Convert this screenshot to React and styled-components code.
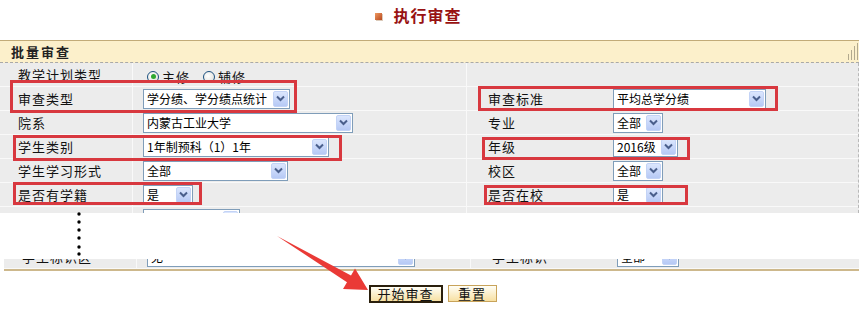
import React from 'react'
import styled, { createGlobalStyle } from 'styled-components'

const GlobalStyle = createGlobalStyle`
  html, body { margin: 0; padding: 0; background: #fff; }
  body {
    font-family: "Noto Sans CJK SC", "Liberation Sans", sans-serif;
    font-size: 12px;
    color: #000;
  }
`

const Page = styled.div`
  position: relative;
  width: 861px;
  height: 310px;
  overflow: hidden;
`

const TitleBar = styled.div`
  height: 40px;
  box-sizing: border-box;
  padding: 5px 24px 0 0;
  display: flex;
  justify-content: center;
  align-items: flex-start;
  gap: 11px;
`

const TitleIcon = styled.span`
  width: 7px;
  height: 7px;
  margin-top: 8px;
  background: linear-gradient(135deg, #ee9a62, #b8481e);
  box-shadow: 1px 1px 0 #dccbbb;
`

const Title = styled.h1`
  margin: 0;
  font-size: 16px;
  line-height: 20px;
  font-weight: bold;
  letter-spacing: 1px;
  color: #981212;
`

const Panel = styled.div`
  width: 859px;
  border-top: 1px solid #c2ab78;
`

const PanelHead = styled.div`
  height: 21px;
  background: #fcf0cb;
  border-bottom: 1px dashed #a9a9a9;
  display: flex;
  align-items: center;
  justify-content: space-between;
  padding: 0 0 0 11px;
  font-size: 13px;
  font-weight: bold;
  letter-spacing: 2px;
  color: #222;
`

const Body = styled.div`
  background: #ececec;
  border-right: 1px dashed #b8b8b8;
`

const Row = styled.div`
  display: grid;
  grid-template-columns: 133px 334px 143px 1fr;
  height: 23px;
  border-bottom: 1px solid #f9f9f9;
`

const Cell = styled.div`
  display: flex;
  align-items: center;
  padding-left: ${p => p.$indent}px;
  border-right: ${p => (p.$divider ? '1px solid #f9f9f9' : 'none')};
  font-size: 13px;
  letter-spacing: 1px;
  color: #111;
  white-space: nowrap;
`

const Clip = styled.div`
  height: ${p => p.$h}px;
  overflow: hidden;
  display: flex;
  flex-direction: column;
  justify-content: ${p => (p.$bottom ? 'flex-end' : 'flex-start')};
  & > * { flex-shrink: 0; }
`

const Gap = styled.div`
  height: 46px;
`

const BottomBody = styled.div`
  margin-left: 4px;
  width: 855px;
  background: #ececec;
  border-bottom: 2px solid #cdb88c;
`

const SelectBox = styled.div`
  width: ${p => p.$w}px;
  height: 20px;
  box-sizing: border-box;
  border: 1px solid #7f9db9;
  background: #fff;
  display: flex;
  align-items: center;
  justify-content: space-between;
  padding-left: 3px;
  font-size: 12px;
  letter-spacing: 0;
  color: #000;
`

const SelectBtn = styled.span`
  width: 15px;
  height: 16px;
  margin-right: 1px;
  box-sizing: border-box;
  border: 1px solid #c3d3f6;
  border-radius: 2px;
  background: linear-gradient(#dbe6fd, #b6c9f5);
  display: flex;
  align-items: center;
  justify-content: center;
`

const Radios = styled.div`
  display: flex;
  align-items: center;
  gap: 13px;
  padding-left: 4px;
  margin-top: 4px;
`

const RadioItem = styled.label`
  display: flex;
  align-items: center;
  gap: 3px;
  font-size: 13px;
  letter-spacing: 1px;
`

const RadioDot = styled.span`
  width: 12px;
  height: 12px;
  box-sizing: border-box;
  border-radius: 50%;
  border: 1px solid #1c5180;
  background: radial-gradient(circle at 40% 40%, #fff, #dcdcd6);
  display: flex;
  align-items: center;
  justify-content: center;
  &::after {
    content: '';
    width: 5px;
    height: 5px;
    border-radius: 50%;
    background: ${p => (p.$on ? '#2fa82f' : 'transparent')};
  }
`

const Actions = styled.div`
  display: flex;
  justify-content: center;
  align-items: flex-start;
  gap: 5px;
  margin-top: 14px;
  padding-left: 4px;
`

const Btn = styled.button`
  width: ${p => p.$w}px;
  height: ${p => (p.$focus ? 18 : 17)}px;
  padding: 0;
  box-sizing: border-box;
  font-family: "Noto Sans CJK SC", sans-serif;
  font-size: 13px;
  line-height: 14px;
  letter-spacing: 1px;
  color: #111;
  background: linear-gradient(#fffef6, #f7e0a2);
  border: ${p => (p.$focus ? '2px solid #2a1f0c' : '1px solid #c8a35a')};
`

const Overlay = styled.svg`
  position: absolute;
  top: 0;
  left: 0;
  pointer-events: none;
`

const Chevron = () => (
  <svg width="9" height="7" viewBox="0 0 9 7">
    <path d="M1 1.5 L4.5 5 L8 1.5" fill="none" stroke="#4a5f8c" strokeWidth="2" />
  </svg>
)

const Select = ({ w, children }) => (
  <SelectBox $w={w}>
    <span>{children}</span>
    <SelectBtn><Chevron /></SelectBtn>
  </SelectBox>
)

const Grip = () => (
  <svg width="12" height="17" viewBox="0 0 12 17">
    <g stroke="#b2a98e" strokeWidth="1">
      <line x1="1.5" y1="17" x2="1.5" y2="11" />
      <line x1="4.5" y1="17" x2="4.5" y2="7" />
      <line x1="7.5" y1="17" x2="7.5" y2="3" />
      <line x1="10.5" y1="17" x2="10.5" y2="0" />
    </g>
  </svg>
)

const FieldRow = ({ label, value, rLabel, rValue }) => (
  <Row>
    <Cell $indent={18} $divider>{label}</Cell>
    <Cell $indent={10} $divider>{value && <Select w={value.w}>{value.text}</Select>}</Cell>
    <Cell $indent={21}>{rLabel}</Cell>
    <Cell $indent={3}>{rValue && <Select w={rValue.w}>{rValue.text}</Select>}</Cell>
  </Row>
)

const rows = [
  { label: '审查类型', value: { text: '学分绩、学分绩点统计', w: 147 }, rLabel: '审查标准', rValue: { text: '平均总学分绩', w: 153 } },
  { label: '院系', value: { text: '内蒙古工业大学', w: 210 }, rLabel: '专业', rValue: { text: '全部', w: 50 } },
  { label: '学生类别', value: { text: '1年制预科（1）1年', w: 186 }, rLabel: '年级', rValue: { text: '2016级', w: 65 } },
  { label: '学生学习形式', value: { text: '全部', w: 145 }, rLabel: '校区', rValue: { text: '全部', w: 50 } },
  { label: '是否有学籍', value: { text: '是', w: 50 }, rLabel: '是否在校', rValue: { text: '是', w: 50 } },
]

// annotation boxes: outer x1, y1, x2, y2
const boxes = [
  [10, 80, 297, 113],
  [478, 86, 778, 111],
  [13, 135, 342, 161],
  [482, 137, 690, 160],
  [13, 182, 202, 205],
  [484, 185, 688, 205],
]

const dots = [214, 222, 230, 238, 247, 254]

export default function App() {
  return (
    <Page>
      <GlobalStyle />
      <TitleBar>
        <TitleIcon />
        <Title>执行审查</Title>
      </TitleBar>

      <Panel>
        <PanelHead>
          <span>批量审查</span>
          <Grip />
        </PanelHead>
        <Body>
          <Row>
            <Cell $indent={18} $divider>教学计划类型</Cell>
            <Cell $indent={10} $divider>
              <Radios>
                <RadioItem><RadioDot $on />主修</RadioItem>
                <RadioItem><RadioDot />辅修</RadioItem>
              </Radios>
            </Cell>
            <Cell />
            <Cell />
          </Row>
          {rows.map(r => <FieldRow key={r.label} {...r} />)}
          <Clip $h={6}>
            <FieldRow label="学生学籍状态" value={{ text: '全部', w: 97 }} />
          </Clip>
        </Body>
        <Gap />
        <BottomBody>
          <Clip $h={10} $bottom>
            <FieldRow label="学生标识区" value={{ text: '无', w: 268 }} rLabel="学生标识" rValue={{ text: '全部', w: 62 }} />
          </Clip>
        </BottomBody>
      </Panel>

      <Actions>
        <Btn $w={74} $focus>开始审查</Btn>
        <Btn $w={49}>重置</Btn>
      </Actions>

      <Overlay width="861" height="310" viewBox="0 0 861 310">
        {boxes.map(([x1, y1, x2, y2]) => (
          <rect
            key={`${x1}-${y1}`}
            x={x1 + 1.5}
            y={y1 + 1.5}
            width={x2 - x1 - 3}
            height={y2 - y1 - 3}
            fill="none"
            stroke="#d8383f"
            strokeWidth="3"
          />
        ))}
        {dots.map(y => <circle key={y} cx="79" cy={y} r="1.7" fill="#000" />)}
        <polygon
          points="277,236 351,275.4 355,268.5 368,290 343,289 347,282.2"
          fill="#ea3a36"
        />
      </Overlay>
    </Page>
  )
}
